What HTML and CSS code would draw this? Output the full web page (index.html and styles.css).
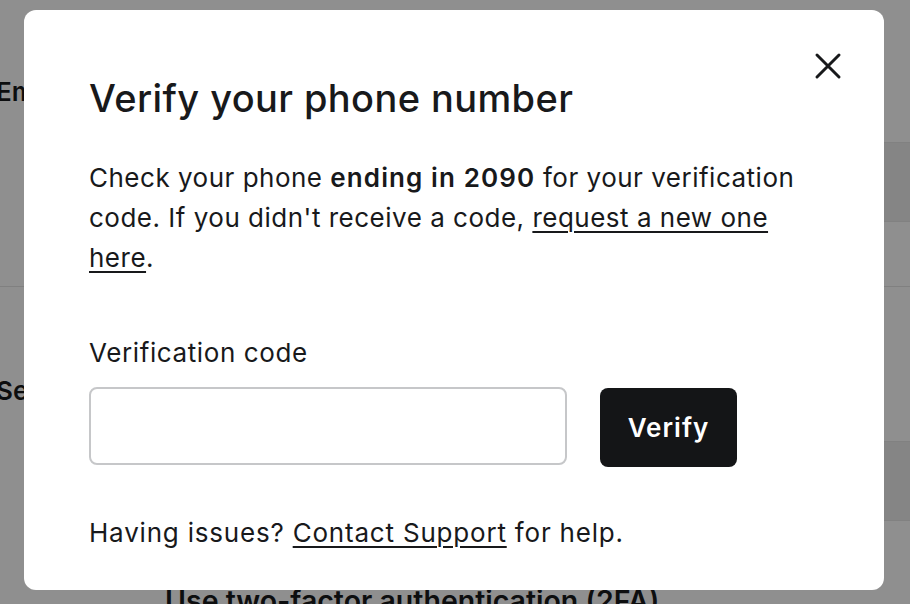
FILE: index.html
```html
<!DOCTYPE html>
<html lang="en">
<head>
    <meta charset="UTF-8">
    <title>Verify your phone number</title>
    <link rel="stylesheet" href="styles.css">
</head>
<body>
    <!-- settings page behind the dialog -->
    <main class="page">
        <section class="settings-group">
            <h2 class="group-title">Email</h2>
            <div class="field-band"></div>
        </section>
        <section class="settings-group">
            <h2 class="group-title">Security</h2>
            <div class="field-band"></div>
            <p class="option-title">Use two-factor authentication (2FA)</p>
        </section>
    </main>

    <!-- overlay + dialog -->
    <div class="overlay">
        <div class="modal" role="dialog">
            <button class="modal-close" aria-label="Close">
                <svg width="28" height="28" viewBox="0 0 28 28">
                    <path d="M3 3 L25 25 M25 3 L3 25" stroke="#18191b" stroke-width="3" stroke-linecap="round"/>
                </svg>
            </button>
            <h1 class="modal-title">Verify your phone number</h1>
            <p class="modal-text">
                Check your phone <b>ending in 2090</b> for your verification
                code. If you didn't receive a code, <a href="javascript:;">request a new one here</a>.
            </p>
            <label class="field-label" for="code">Verification code</label>
            <div class="code-row">
                <input type="text" id="code" class="code-input">
                <button class="verify-btn">Verify</button>
            </div>
            <p class="modal-help">Having issues? <a href="javascript:;">Contact Support</a> for help.</p>
        </div>
    </div>
</body>
</html>
```

FILE: styles.css
```css
* {
    margin: 0;
    padding: 0;
    box-sizing: border-box;
}

body {
    width: 100%;
    height: 604px;
    overflow: hidden;
    background-color: #fff;
    font-family: Inter, "Noto Sans", sans-serif;
    color: #18191b;
}

a {
    color: #18191b;
    text-decoration: underline;
    text-underline-offset: 4px;
    text-decoration-thickness: 2px;
}

/* page behind */
.page {
    margin-left: -4px;
}

.settings-group {
    padding-top: 76px;
    height: 287px;
    border-bottom: 1px solid #e4e4e4;
}

.settings-group + .settings-group {
    padding-top: 88px;
    height: auto;
    border-bottom: 0;
}

.group-title {
    font-size: 26px;
    line-height: 32px;
    font-weight: 600;
}

.field-band {
    margin: 34px 0 0 400px;
    height: 80px;
    background-color: #ededed;
    border-top: 1px solid #e6e6e6;
    border-bottom: 1px solid #e6e6e6;
}

.option-title {
    margin: 64px 0 0 169px;
    font-size: 28.5px;
    font-weight: 600;
    line-height: 32px;
}

/* overlay */
.overlay {
    position: fixed;
    top: 0;
    left: 0;
    width: 100%;
    height: 100%;
    padding: 10px 0 0 24px;
    background-color: rgba(0, 0, 0, .44);
}

.modal {
    position: relative;
    width: 860px;
    height: 580px;
    padding: 66px 65px 0 65px;
    background-color: #fff;
    border-radius: 12px;
}

.modal-close {
    position: absolute;
    top: 36px;
    right: 36px;
    width: 40px;
    height: 40px;
    border: 0;
    background: none;
    display: flex;
    align-items: center;
    justify-content: center;
    cursor: pointer;
}

.modal-title {
    font-size: 38px;
    line-height: 44px;
    font-weight: 500;
    letter-spacing: 0.4px;
}

.modal-text {
    margin-top: 38px;
    font-size: 26px;
    line-height: 40px;
    letter-spacing: 0.5px;
    font-weight: 400;
}

.modal-text b {
    font-weight: 600;
    letter-spacing: 1.1px;
}

.field-label {
    display: block;
    margin-top: 55px;
    font-size: 26px;
    line-height: 40px;
    letter-spacing: 0.6px;
}

.code-row {
    display: flex;
    align-items: flex-start;
    gap: 33px;
    margin-top: 14px;
}

.code-input {
    width: 478px;
    height: 78px;
    border: 2px solid #c6c7c9;
    border-radius: 8px;
    font-size: 24px;
    padding: 0 16px;
}

.verify-btn {
    margin-top: 1px;
    width: 137px;
    height: 79px;
    border: 0;
    border-radius: 8px;
    background-color: #141517;
    color: #fff;
    font-family: Inter, "Noto Sans", sans-serif;
    font-size: 26px;
    font-weight: 600;
    letter-spacing: 1px;
}

.modal-help {
    margin-top: 46px;
    font-size: 26px;
    line-height: 40px;
    letter-spacing: 0.8px;
}
```
